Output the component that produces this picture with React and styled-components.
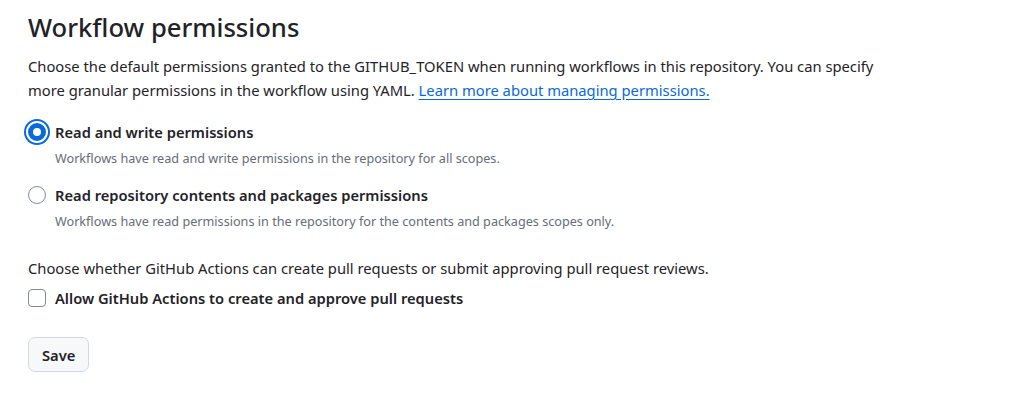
import React from "react";
import styled, { createGlobalStyle } from "styled-components";

const Global = createGlobalStyle`
  html, body { margin: 0; padding: 0; background: #ffffff; }
  body {
    font-family: "Noto Sans", "Open Sans", sans-serif;
    color: #1f2328;
  }
`;

const Page = styled.div`
  padding: 8px 28px 0 28px;
  width: 900px;
`;

const Title = styled.h2`
  margin: 0;
  font-size: 25.6px;
  font-weight: 500;
  line-height: 40px;
  color: #1f2328;
`;

const Para = styled.p`
  margin: ${(p) => p.$mt || 0}px 0 0 0;
  max-width: 852px;
  font-size: 14.75px;
  line-height: 24px;
  color: #1f2328;
`;

const Link = styled.a`
  color: #0969da;
  text-decoration: underline;
  text-underline-offset: 3px;
`;

const OptionList = styled.div`
  display: flex;
  flex-direction: column;
  gap: 15px;
  margin-top: 18px;
`;

const Option = styled.label`
  display: grid;
  grid-template-columns: 18px 1fr;
  column-gap: 9px;
  align-items: center;
`;

const Radio = styled.span`
  box-sizing: border-box;
  width: 18px;
  height: 18px;
  border-radius: 50%;
  background: #fff;
  border: ${(p) => (p.$checked ? "5px solid #0969da" : "1px solid #818b98")};
  box-shadow: ${(p) =>
    p.$checked ? "0 0 0 2px #fff, 0 0 0 4px #0969da" : "none"};
`;

const Check = styled.span`
  box-sizing: border-box;
  width: 18px;
  height: 18px;
  border-radius: 4px;
  background: #fff;
  border: 1px solid #818b98;
`;

const LabelText = styled.span`
  font-size: 14.7px;
  font-weight: 600;
  line-height: 24px;
  color: #1f2328;
`;

const Note = styled.span`
  grid-column: 2;
  font-size: 12.65px;
  line-height: 20px;
  color: #656d76;
  margin-top: 4px;
`;

const CheckRow = styled(Option)`
  margin-top: 6px;
`;

const Button = styled.button`
  margin-top: 27px;
  box-sizing: border-box;
  height: 35px;
  padding: 0 13px;
  border: 1px solid #d1d9e0;
  border-radius: 7px;
  background: #f6f8fa;
  font-family: inherit;
  font-size: 14.75px;
  font-weight: 600;
  color: #1f2328;
`;

export default function App() {
  return (
    <>
      <Global />
      <Page>
        <Title>Workflow permissions</Title>
        <Para $mt={6}>
          Choose the default permissions granted to the GITHUB_TOKEN when
          running workflows in this repository. You can specify more granular
          permissions in the workflow using YAML.{" "}
          <Link href="#">Learn more about managing permissions.</Link>
        </Para>
        <OptionList>
          <Option>
            <Radio $checked />
            <LabelText>Read and write permissions</LabelText>
            <Note>
              Workflows have read and write permissions in the repository for
              all scopes.
            </Note>
          </Option>
          <Option>
            <Radio />
            <LabelText>Read repository contents and packages permissions</LabelText>
            <Note>
              Workflows have read permissions in the repository for the contents
              and packages scopes only.
            </Note>
          </Option>
        </OptionList>
        <Para $mt={25}>
          Choose whether GitHub Actions can create pull requests or submit
          approving pull request reviews.
        </Para>
        <CheckRow>
          <Check />
          <LabelText>Allow GitHub Actions to create and approve pull requests</LabelText>
        </CheckRow>
        <Button>Save</Button>
      </Page>
    </>
  );
}
